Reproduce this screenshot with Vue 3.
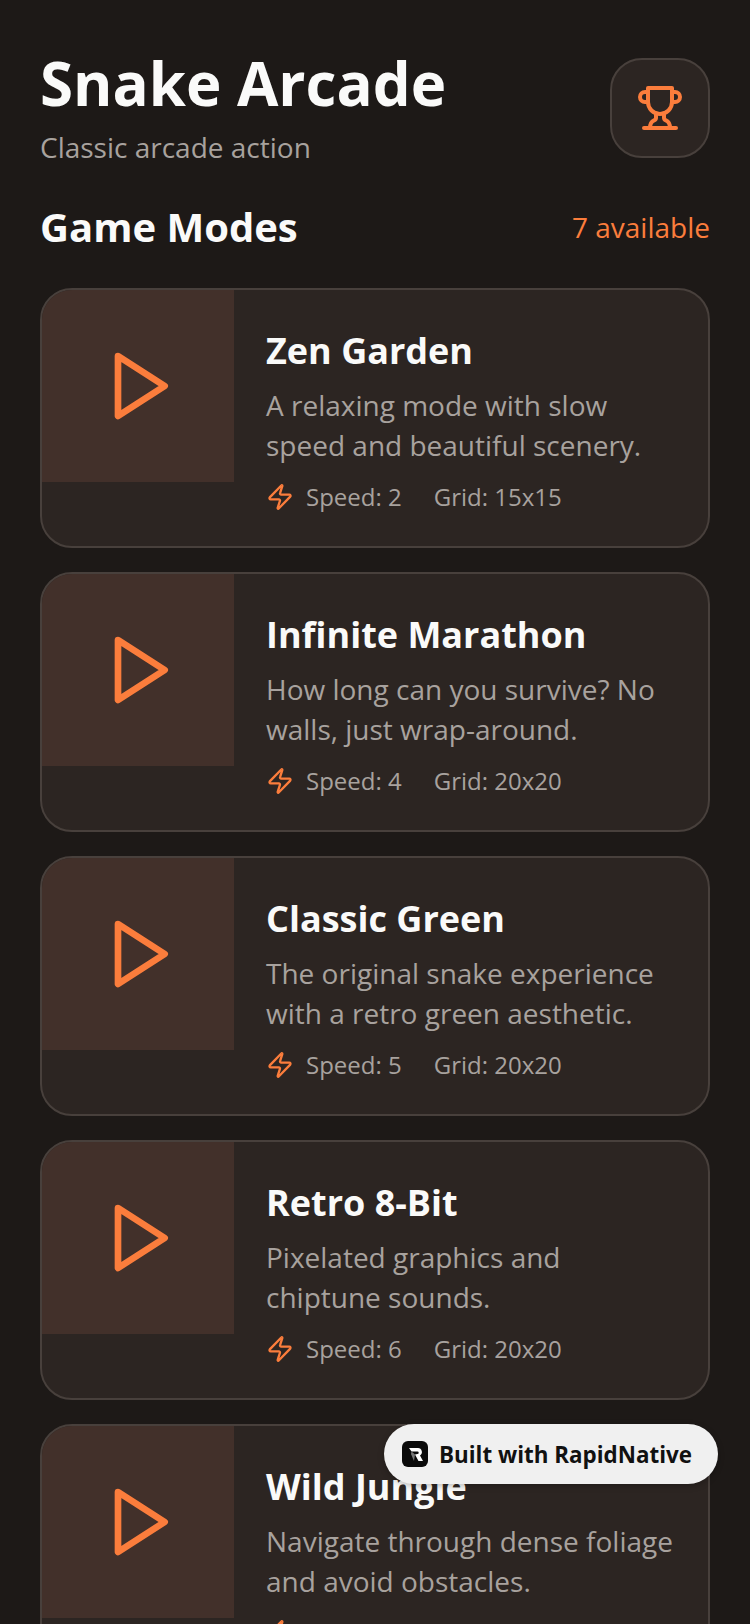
<template>
  <div class="screen">
    <header class="top">
      <div>
        <h1>Snake Arcade</h1>
        <p class="subtitle">Classic arcade action</p>
      </div>
      <div class="trophy">
        <svg width="48" height="48" viewBox="0 0 24 24" class="line">
          <path d="M6 9H4.5a2.5 2.5 0 0 1 0-5H6" />
          <path d="M18 9h1.5a2.5 2.5 0 0 0 0-5H18" />
          <path d="M4 22h16" />
          <path d="M10 14.66V17c0 .55-.47.98-.97 1.21C7.85 18.75 7 20.24 7 22" />
          <path d="M14 14.66V17c0 .55.47.98.97 1.21C16.15 18.75 17 20.24 17 22" />
          <path d="M18 2H6v7a6 6 0 0 0 12 0V2Z" />
        </svg>
      </div>
    </header>

    <div class="section">
      <h2>Game Modes</h2>
      <span class="count">7 available</span>
    </div>

    <div class="list">
      <div class="card" v-for="mode in modes" :key="mode.name">
        <div class="thumb">
          <svg width="80" height="80" viewBox="0 0 24 24" class="line">
            <polygon points="6 3 20 12 6 21 6 3" />
          </svg>
        </div>
        <div class="info">
          <div class="name">{{ mode.name }}</div>
          <p class="desc">{{ mode.desc }}</p>
          <div class="meta">
            <svg width="28" height="28" viewBox="0 0 24 24" class="line">
              <path d="M4 14a1 1 0 0 1-.78-1.63l9.9-10.2a.5.5 0 0 1 .86.46l-1.92 6.02A1 1 0 0 0 13 10h7a1 1 0 0 1 .78 1.63l-9.9 10.2a.5.5 0 0 1-.86-.46l1.92-6.02A1 1 0 0 0 11 14z" />
            </svg>
            <span class="speed">Speed: {{ mode.speed }}</span>
            <span>Grid: {{ mode.grid }}</span>
          </div>
        </div>
      </div>
    </div>

    <div class="badge">
      <svg width="26" height="26" viewBox="0 0 26 26">
        <rect width="26" height="26" rx="6" fill="#0a0a0a" />
        <path d="M7 7h9a4 4 0 0 1 2 7.400L21 20h-4.500l-3.500-6.500 2.500-.5a1.200 1.200 0 0 0 0-2.400H9.500z" fill="#fff" />
        <path d="M9.500 10.500l3.500 3-1 6.500-3-7z" fill="#777" />
      </svg>
      <span>Built with RapidNative</span>
    </div>
  </div>
</template>

<script setup>
const modes = [
  { name: 'Zen Garden', desc: 'A relaxing mode with slow speed and beautiful scenery.', speed: 2, grid: '15x15' },
  { name: 'Infinite Marathon', desc: 'How long can you survive? No walls, just wrap-around.', speed: 4, grid: '20x20' },
  { name: 'Classic Green', desc: 'The original snake experience with a retro green aesthetic.', speed: 5, grid: '20x20' },
  { name: 'Retro 8-Bit', desc: 'Pixelated graphics and chiptune sounds.', speed: 6, grid: '20x20' },
  { name: 'Wild Jungle', desc: 'Navigate through dense foliage and avoid obstacles.', speed: 7, grid: '25x25' }
]
</script>

<style>
html,
body {
  margin: 0;
  background: #1d1917;
}
</style>

<style scoped>
.screen {
  position: relative;
  width: 750px;
  height: 1624px;
  overflow: hidden;
  box-sizing: border-box;
  padding: 47px 40px 0;
  background: #1d1917;
  font-family: "Open Sans", sans-serif;
  color: #fafaf9;
}
.top {
  display: flex;
  justify-content: space-between;
  align-items: flex-start;
}
h1 {
  margin: 0;
  font-size: 60px;
  line-height: 72px;
  font-weight: 700;
}
.subtitle {
  margin: 8px 0 0;
  font-size: 28px;
  line-height: 40px;
  color: #a8a29e;
}
.trophy {
  width: 100px;
  height: 100px;
  margin-top: 11px;
  box-sizing: border-box;
  border: 2px solid #48403c;
  border-radius: 32px;
  background: #2c2522;
  display: flex;
  align-items: center;
  justify-content: center;
}
.line {
  fill: none;
  stroke: #fb7d3c;
  stroke-width: 2;
  stroke-linecap: round;
  stroke-linejoin: round;
  flex: none;
}
.section {
  display: flex;
  justify-content: space-between;
  align-items: center;
  margin-top: 32px;
}
h2 {
  margin: 0;
  font-size: 40px;
  line-height: 56px;
  font-weight: 700;
}
.count {
  font-size: 28px;
  color: #fb7d3c;
}
.list {
  margin-top: 33px;
  display: flex;
  flex-direction: column;
  gap: 24px;
}
.card {
  display: flex;
  align-items: flex-start;
  flex: none;
  height: 260px;
  box-sizing: border-box;
  border: 2px solid #48403c;
  border-radius: 32px;
  background: #2c2522;
  overflow: hidden;
}
.thumb {
  width: 192px;
  height: 192px;
  flex: none;
  background: #42302a;
  display: flex;
  align-items: center;
  justify-content: center;
}
.info {
  flex: 1;
  padding: 37px 32px 0;
}
.name {
  font-size: 36px;
  line-height: 48px;
  font-weight: 700;
}
.desc {
  margin: 10px 0 0;
  font-size: 28px;
  line-height: 40px;
  color: #a8a29e;
}
.meta {
  display: flex;
  align-items: center;
  margin-top: 16px;
  font-size: 24px;
  line-height: 32px;
  color: #a8a29e;
}
.speed {
  margin-left: 12px;
  margin-right: 32px;
}
.badge {
  position: absolute;
  left: 384px;
  top: 1424px;
  width: 334px;
  height: 60px;
  box-sizing: border-box;
  padding-left: 18px;
  border-radius: 30px;
  background: #f0f0f0;
  box-shadow: 0 2px 6px rgba(0, 0, 0, 0.25);
  display: flex;
  align-items: center;
  gap: 11px;
  font-size: 22.4px;
  font-weight: 700;
  color: #111;
}
</style>
